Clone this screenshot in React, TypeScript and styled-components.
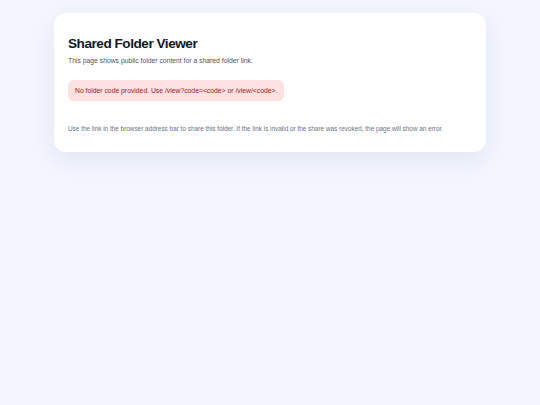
import React from 'react'
import styled, { createGlobalStyle } from 'styled-components'

const GlobalStyle = createGlobalStyle`
  html, body {
    margin: 0;
    padding: 0;
    background: #f3f6fd;
    font-family: "Liberation Sans", Arial, sans-serif;
  }
`

const Page = styled.div`
  min-height: 405px;
  padding: 13px 0;
  box-sizing: border-box;
`

const Card = styled.main`
  width: 432px;
  margin: 0 auto;
  box-sizing: border-box;
  padding: 22px 14px 19px;
  background: #fff;
  border-radius: 12px;
  box-shadow: 0 8px 24px rgba(30, 41, 80, 0.08);
`

const Title = styled.h1`
  margin: 0;
  font-size: 13.6px;
  line-height: 17px;
  font-weight: 700;
  letter-spacing: -0.035em;
  color: #111827;
`

const Subtitle = styled.p`
  margin: 4px 0 0;
  font-size: 6.8px;
  line-height: 10px;
  color: #4b5563;
`

const ErrorBox = styled.div`
  display: inline-block;
  margin-top: 14px;
  padding: 6px 7px;
  font-size: 6.8px;
  line-height: 9px;
  color: #991b1b;
  background: #fee2e2;
  border-radius: 6px;
`

const Hint = styled.p`
  margin: 23px 0 0;
  font-size: 6.4px;
  line-height: 9px;
  color: #6b7280;
`

export default function App() {
  return (
    <>
      <GlobalStyle />
      <Page>
        <Card>
          <Title>Shared Folder Viewer</Title>
          <Subtitle>This page shows public folder content for a shared folder link.</Subtitle>
          <ErrorBox>No folder code provided. Use /view?code=&lt;code&gt; or /view/&lt;code&gt;.</ErrorBox>
          <Hint>
            Use the link in the browser address bar to share this folder. If the link is invalid or the share was
            revoked, the page will show an error.
          </Hint>
        </Card>
      </Page>
    </>
  )
}
